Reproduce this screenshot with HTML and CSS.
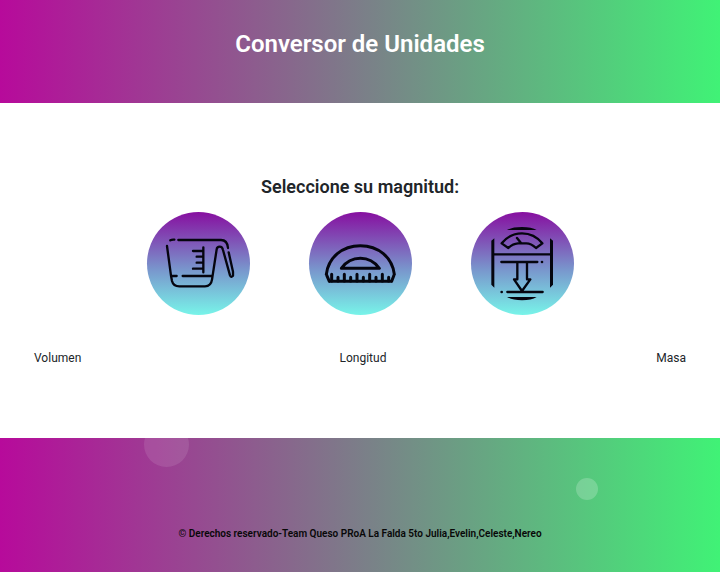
FILE: index.html
```html
<!DOCTYPE html>
<html lang="es">
<head>
<meta charset="utf-8">
<meta name="viewport" content="width=device-width, initial-scale=1">
<title>Conversor de Unidades</title>
<link rel="stylesheet" href="styles.css">
</head>
<body>
<header class="header">
  <h1 class="title">Conversor de Unidades</h1>
</header>
<main class="main">
  <h2 class="subtitle">Seleccione su magnitud:</h2>
  <nav class="options">
    <a class="option" href="#volumen" aria-labelledby="volumen">
      <svg class="icon" viewBox="21 21 309 309" aria-hidden="true">
        <path d="M91 106q5-3 12-2M115 105H243Q262 105 264 129M81 123 93 212 96 228Q100 244 118 244H195Q213 244 216 224L230 133Q231 125 239 125T249 135L270 211Q273 219 279 212V200L266 142M96 213H110M128 213H215M190 127V202M159 138H190M170 155H190M170 173H190M159 191H190"/>
      </svg>
    </a>
    <a class="option" href="#longitud" aria-labelledby="longitud">
      <svg class="icon" viewBox="26 21 309 309" aria-hidden="true">
        <path class="bold" d="M78 208C84 157 126 122 180 122S276 157 282 208M87 229H274M78 208 87 229M282 208 274 229M123 190Q145 160 180 160T237 190Z"/>
        <path class="bold" d="M94 208V228M113 217V228M132 208V228M151 217V228M170 208V228M189 217V228M208 208V228M227 217V228M246 208V228M265 217V228"/>
      </svg>
    </a>
    <a class="option" href="#masa" aria-labelledby="masa">
      <svg class="icon" viewBox="26 21 309 309" aria-hidden="true">
        <path class="solid" d="M134 75Q150 66 179 66T223 75ZM134 276H223Q207 286 179 286T134 276ZM87 107 96 100V248L87 239ZM272 107 263 100V248L272 239Z"/>
        <path d="M95 148H264M117 171H225M135 261H241M165 173V223H155L179 258 204 223H194V173M118 115Q142 85 179 85T240 115L221 129Q206 115 192 115H167Q151 116 138 129ZM164 99 176 114"/>
        <circle class="solid" cx="239" cy="171" r="4"/>
        <circle class="solid" cx="118" cy="261" r="4"/>
      </svg>
    </a>
  </nav>
  <div class="labels">
    <span class="label" id="volumen">Volumen</span>
    <span class="label" id="longitud">Longitud</span>
    <span class="label label-end" id="masa">Masa</span>
  </div>
</main>
<footer class="footer">
  <span class="bubble bubble-large"></span>
  <span class="bubble bubble-small"></span>
  <p class="copyright">© Derechos reservado-Team Queso PRoA La Falda 5to Julia,Evelin,Celeste,Nereo</p>
</footer>
</body>
</html>
```
FILE: styles.css
```css
* {
  box-sizing: border-box;
}

body {
  margin: 0;
  min-height: 100vh;
  display: flex;
  flex-direction: column;
  font-family: Roboto, "Liberation Sans", sans-serif;
  color: #212529;
  background: #fff;
}

.header,
.footer {
  background: linear-gradient(to right, #b70a9b, #40f276);
}

.header {
  padding: 30px 16px 45px;
}

.title {
  margin: 0;
  font-size: 24px;
  font-weight: 600;
  line-height: 28px;
  text-align: center;
  color: #fff;
}

.main {
  padding: 72px 0;
}

.subtitle {
  margin: 0;
  font-size: 18px;
  font-weight: 600;
  line-height: 24px;
  text-align: center;
}

.options {
  display: flex;
  justify-content: center;
  gap: 59px;
  margin-top: 13px;
}

.option {
  width: 103px;
  height: 103px;
  border-radius: 50%;
  background: linear-gradient(#870fa0, #7994cc 55%, #78f4e9);
}

.icon {
  display: block;
  width: 100%;
  fill: none;
  stroke: #05050f;
  stroke-width: 7;
  stroke-linecap: round;
  stroke-linejoin: round;
}

.bold {
  stroke-width: 9;
}

.solid {
  fill: #05050f;
  stroke: none;
}

.labels {
  display: grid;
  grid-template-columns: 51fr auto 50fr;
  margin-top: 35px;
  padding: 0 34px;
}

.label {
  font-size: 12px;
  line-height: 16px;
}

.label-end {
  text-align: right;
}

.footer {
  position: relative;
  flex: 1;
  overflow: hidden;
  padding: 88px 16px 30px;
}

.bubble {
  position: absolute;
  border-radius: 50%;
  background: rgba(255, 255, 255, 0.1);
}

.bubble-large {
  width: 45px;
  height: 45px;
  left: 20%;
  top: -16px;
}

.bubble-small {
  width: 22px;
  height: 22px;
  left: 80%;
  top: 40px;
  background: rgba(255, 255, 255, 0.2);
}

.copyright {
  position: relative;
  margin: 0;
  font-size: 10px;
  font-weight: 600;
  line-height: 16px;
  text-align: center;
  color: #080808;
}
```
